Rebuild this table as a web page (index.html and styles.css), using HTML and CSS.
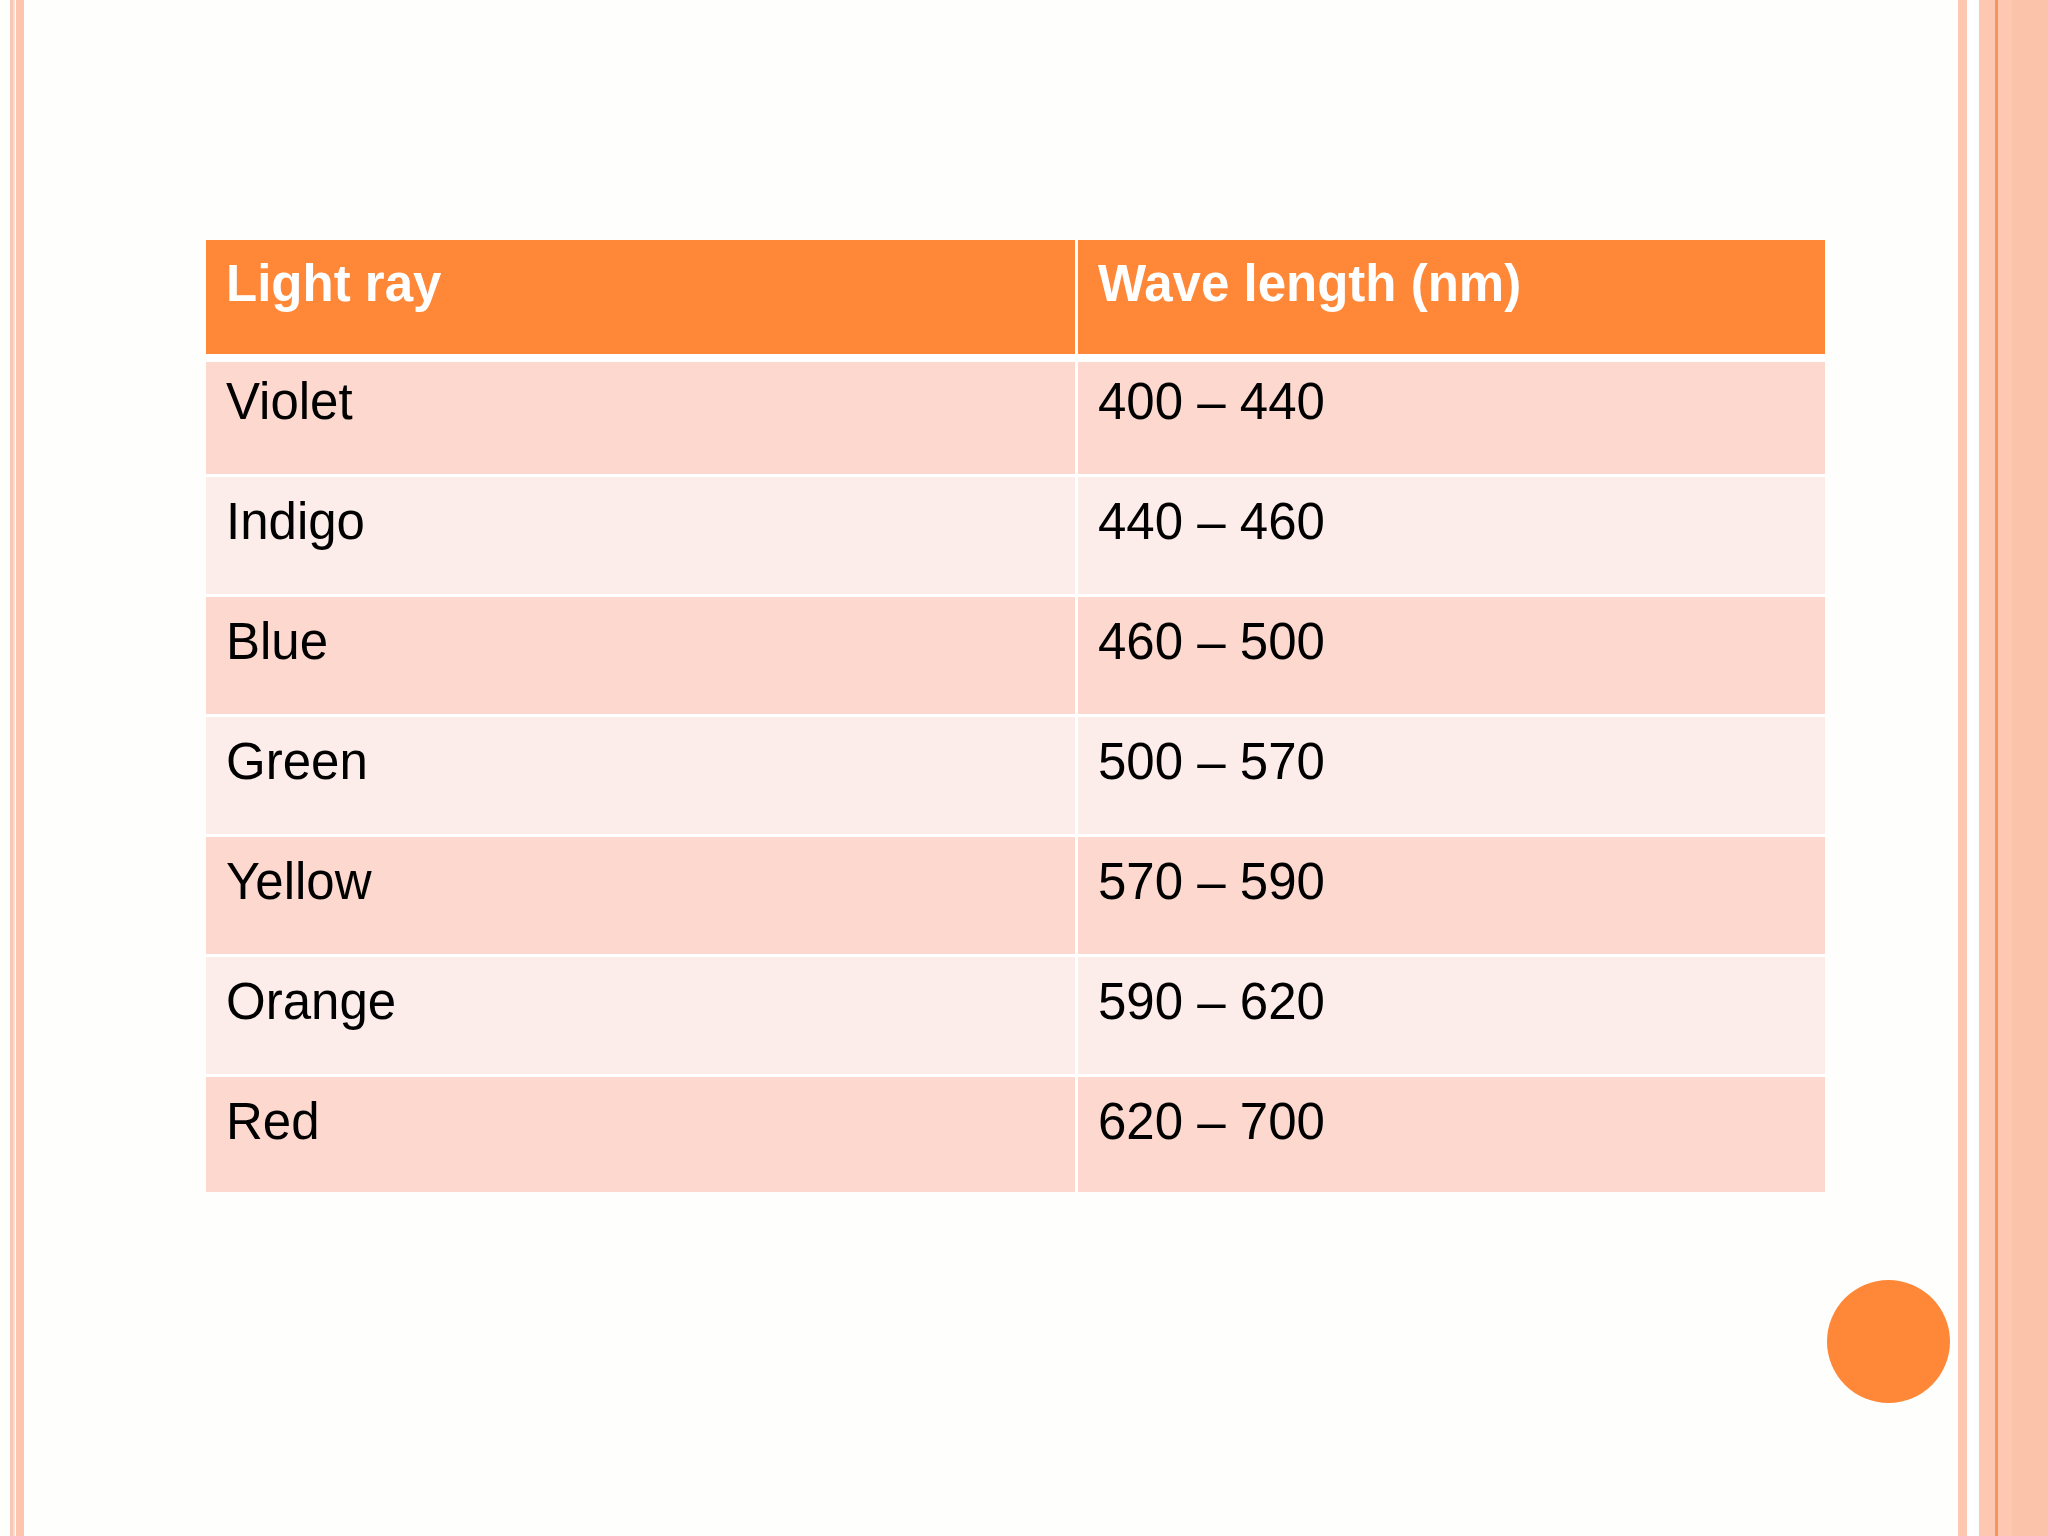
FILE: index.html
```html
<!DOCTYPE html>
<html lang="en">
<head>
<meta charset="utf-8">
<title>Light ray wavelengths</title>
<link rel="stylesheet" href="styles.css">
</head>
<body>
<div class="slide">
  <div class="frame frame-left">
    <div class="s s-gap10"></div>
    <div class="s s-a"></div>
    <div class="s s-b"></div>
    <div class="s s-gap1"></div>
    <div class="s s-c"></div>
  </div>
  <div class="content">
    <div class="table">
      <div class="row head">
        <div class="cell">Light ray</div>
        <div class="cell">Wave length (nm)</div>
      </div>
      <div class="row odd first">
        <div class="cell">Violet</div>
        <div class="cell">400 – 440</div>
      </div>
      <div class="row even">
        <div class="cell">Indigo</div>
        <div class="cell">440 – 460</div>
      </div>
      <div class="row odd">
        <div class="cell">Blue</div>
        <div class="cell">460 – 500</div>
      </div>
      <div class="row even">
        <div class="cell">Green</div>
        <div class="cell">500 – 570</div>
      </div>
      <div class="row odd">
        <div class="cell">Yellow</div>
        <div class="cell">570 – 590</div>
      </div>
      <div class="row even">
        <div class="cell">Orange</div>
        <div class="cell">590 – 620</div>
      </div>
      <div class="row odd last">
        <div class="cell">Red</div>
        <div class="cell">620 – 700</div>
      </div>
    </div>
    <div class="dot"></div>
  </div>
  <div class="frame frame-right">
    <div class="s r-a"></div>
    <div class="s r-gap"></div>
    <div class="s r-b"></div>
    <div class="s r-line"></div>
    <div class="s r-c"></div>
    <div class="s r-d"></div>
  </div>
</div>
</body>
</html>
```
FILE: styles.css
```css
html, body {
  margin: 0;
  padding: 0;
  background: #fefefc;
}
body {
  font-family: "Liberation Sans", Arial, sans-serif;
}
.slide {
  display: flex;
  width: 2048px;
  height: 1536px;
  overflow: hidden;
  background: #fefefc;
}
.frame {
  display: flex;
  height: 100%;
  flex: none;
}
.frame-left { width: 24px; }
.frame-right { width: 90px; }
.s { height: 100%; flex: none; }
.s-gap10 { width: 10px; }
.s-a { width: 3px; background: #f6c6b7; }
.s-b { width: 2px; background: #fadbd0; }
.s-gap1 { width: 1px; }
.s-c { width: 8px; background: #fdc5ae; }

.r-a { width: 9px; background: #fdc7b1; }
.r-gap { width: 12px; background: #ffffff; }
.r-b { width: 16px; background: #fdc7b1; }
.r-line { width: 3px; background: #f7935d; }
.r-c { width: 14px; background: #fdc7b1; }
.r-d { width: 36px; background: #fcc3ab; }

.content {
  position: relative;
  flex: 1;
  padding: 240px 0 0 182px;
  box-sizing: border-box;
}
.table {
  width: 1619px;
  display: flex;
  flex-direction: column;
  gap: 3px;
  background: #ffffff;
}
.row {
  display: grid;
  grid-template-columns: 869px 747px;
  column-gap: 3px;
  height: 117px;
}
.cell {
  box-sizing: border-box;
  padding: 16px 0 0 20px;
  font-size: 51px;
  line-height: 57px;
  color: #000000;
}
.head {
  height: 114px;
  margin-bottom: 5px;
}
.head .cell {
  background: #fe8738;
  color: #ffffff;
  font-weight: bold;
  padding-top: 15px;
}
.first { height: 112px; }
.first .cell { padding-top: 11px; }
.last { height: 115px; }
.odd .cell { background: #fdd8ce; }
.even .cell { background: #fdedea; }

.dot {
  position: absolute;
  left: 1803px;
  top: 1280px;
  width: 123px;
  height: 123px;
  border-radius: 50%;
  background: #fe8738;
}
```
